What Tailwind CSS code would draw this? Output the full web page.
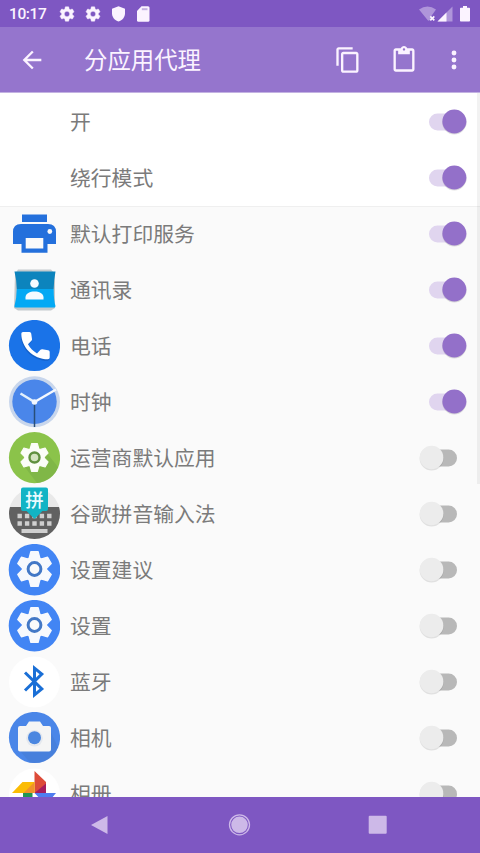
<!DOCTYPE html>
<html lang="zh-CN">
<head>
<meta charset="utf-8">
<title>分应用代理</title>
<script src="https://cdn.jsdelivr.net/npm/@tailwindcss/browser@4"></script>
</head>
<body class="w-[480px] h-[853px] overflow-hidden flex flex-col bg-[#fafafa] font-['Roboto','Noto_Sans_CJK_SC',sans-serif]">
<svg class="hidden">
  <defs>
    <path id="gear" d="M19.14 12.94c.04-.3.06-.61.06-.94 0-.32-.02-.64-.07-.94l2.03-1.58c.18-.14.23-.41.12-.61l-1.92-3.32c-.12-.22-.37-.29-.59-.22l-2.39.96c-.5-.38-1.03-.7-1.62-.94l-.36-2.54c-.04-.24-.24-.41-.48-.41h-3.84c-.24 0-.43.17-.47.41l-.36 2.54c-.59.24-1.13.57-1.62.94l-2.39-.96c-.22-.08-.47 0-.59.22L2.74 8.87c-.12.21-.08.47.12.61l2.03 1.58c-.05.3-.09.63-.09.94s.02.64.07.94l-2.03 1.58c-.18.14-.23.41-.12.61l1.92 3.32c.12.22.37.29.59.22l2.39-.96c.5.38 1.03.7 1.62.94l.36 2.54c.05.24.24.41.48.41h3.84c.24 0 .44-.17.47-.41l.36-2.54c.59-.24 1.13-.56 1.62-.94l2.39.96c.22.08.47 0 .59-.22l1.92-3.32c.12-.22.07-.47-.12-.61l-2.01-1.58zM12 15.6c-1.98 0-3.6-1.62-3.6-3.6s1.62-3.6 3.6-3.6 3.6 1.62 3.6 3.6-1.62 3.6-3.6 3.6z"/>
    <path id="teeth" stroke-width="1.4" stroke-linejoin="round" d="M-3.600-17.200h7.200L5.400-10.500V10.500L3.600 17.200h-7.200L-5.400 10.500V-10.500z"/>
    <g id="cog"><circle r="12.600" stroke="none"/><use href="#teeth"/><use href="#teeth" transform="rotate(60)"/><use href="#teeth" transform="rotate(120)"/></g>
    <g id="settings">
      <circle cx="26" cy="26" r="25.800" fill="#4285f4"/>
      <use href="#cog" transform="translate(26 25.300)" fill="#f7f9fd" stroke="#f7f9fd"/>
      <circle cx="26" cy="25.300" r="6.400" fill="#fafafa" stroke="#4378c6" stroke-width="3"/>
    </g>
    <g id="on">
      <rect x="14" y="19.500" width="38" height="17" rx="8.500" fill="#e0d5ef"/>
      <circle cx="39.300" cy="28.600" r="12" fill="#000" opacity=".13"/>
      <circle cx="39.300" cy="27.500" r="11.900" fill="#9370c9"/>
    </g>
    <g id="off">
      <rect x="10" y="19.500" width="32" height="17" rx="8.500" fill="#b8b8b8"/>
      <circle cx="16.600" cy="28.600" r="12" fill="#000" opacity=".1"/>
      <circle cx="16.600" cy="27.500" r="11.800" fill="#ececec"/>
    </g>
  </defs>
</svg>

<header class="shrink-0 text-[#fbf3ff]">
  <div class="h-[27px] bg-[#7e57c2] flex items-center pl-[9px] pr-[9px]">
    <span class="w-[49px] text-[15.500px] leading-[27px] tracking-[-0.4px] pt-[2px] font-medium">10:17</span>
    <svg class="w-[18px] h-[18px] mr-[8px]" viewBox="0 0 24 24" fill="currentColor" stroke="currentColor" stroke-width=".6"><use href="#gear"/></svg>
    <svg class="w-[18px] h-[18px] mr-[8px]" viewBox="0 0 24 24" fill="currentColor" stroke="currentColor" stroke-width=".6"><use href="#gear"/></svg>
    <svg class="w-[17px] h-[18px] mr-[9px]" viewBox="0 0 17 18" fill="currentColor"><path d="M8.500 1.300 15 3.800v4.400c0 4-2.700 7-6.500 8.300C4.700 15.200 2 12.200 2 8.200V3.800z"/></svg>
    <svg class="w-[14px] h-[18px]" viewBox="0 0 14 18"><path fill="currentColor" d="M5.500 1.300h6.500q1.500 0 1.500 1.500v12.400q0 1.500-1.500 1.500H2.500Q1 16.700 1 15.200V6z"/><path d="M5.800 3.200h5.700v2H5.800z" fill="#c4b0e2"/></svg>
    <svg class="ml-auto w-[52px] h-[20px]" viewBox="0 0 52 20" fill="currentColor">
      <path d="M0 5.500Q8.500-.7 17 5.500L12 12.500v3.300l-2.800 1z" opacity=".4"/>
      <path d="m11.300 12.300 4 4m0-4-4 4" stroke="currentColor" stroke-width="1.700"/>
      <path d="M33.500 2.500v15H18.500z" opacity=".4"/><path d="M27.500 8.500v9h-9z"/>
      <path d="M44 2h4v1.700h2.200q.8 0 .8.800v12.200q0 .8-.8.800h-8.400q-.8 0-.8-.8V4.500q0-.8.800-.8H44z"/>
    </svg>
  </div>
  <div class="h-[66px] bg-[#9575cd] flex items-center pl-[18px] pr-[12px] border-b border-[#c3b2e2]">
    <svg class="w-[28px] h-[28px]" viewBox="0 0 24 24" fill="currentColor"><path d="M20 11H7.830l5.590-5.590L12 4l-8 8 8 8 1.410-1.410L7.830 13H20z"/></svg>
    <h1 class="ml-[38px] -mt-[2px] text-[23.400px] leading-[32px] text-[#fbf3ff] font-['Noto_Sans_CJK_SC',sans-serif]">分应用代理</h1>
    <svg class="ml-auto w-[28px] h-[28px]" viewBox="0 0 24 24" fill="currentColor"><path d="M16 1H4c-1.100 0-2 .9-2 2v14h2V3h12zm3 4H8c-1.100 0-2 .9-2 2v14c0 1.100.9 2 2 2h11c1.100 0 2-.9 2-2V7c0-1.100-.9-2-2-2m0 16H8V7h11z"/></svg>
    <svg class="ml-[28px] w-[28px] h-[28px]" viewBox="0 0 24 24" fill="currentColor"><path d="M19 2h-4.180C14.400.84 13.300 0 12 0S9.600.84 9.180 2H5c-1.100 0-2 .9-2 2v16c0 1.100.9 2 2 2h14c1.100 0 2-.9 2-2V4c0-1.100-.9-2-2-2m-7 0c.55 0 1 .45 1 1s-.45 1-1 1-1-.45-1-1 .45-1 1-1m7 18H5V4h2v3h10V4h2z"/></svg>
    <svg class="ml-[22px] w-[28px] h-[28px]" viewBox="0 0 24 24" fill="currentColor"><circle cx="12" cy="6" r="2.100"/><circle cx="12" cy="12" r="2.100"/><circle cx="12" cy="18" r="2.100"/></svg>
  </div>
</header>

<main class="relative flex-1 min-h-0 overflow-hidden text-[#7b7b7b] text-[20.800px] leading-[30px] font-['Noto_Sans_CJK_SC',sans-serif]">
  <section class="bg-white pt-[1px] border-b border-[#efefef]">
    <div class="h-[56px] flex items-center pl-[70px] pr-[5px]"><span class="flex-1 pb-[2px]">开</span><svg class="w-[60px] h-[56px]"><use href="#on"/></svg></div>
    <div class="h-[56px] flex items-center pl-[70px] pr-[5px]"><span class="flex-1 pb-[2px]">绕行模式</span><svg class="w-[60px] h-[56px]"><use href="#on"/></svg></div>
  </section>
  <ul class="-mt-px">
    <li class="h-[56px] flex items-center pl-[8px] pr-[5px]">
      <svg class="w-[52px] h-[52px] mr-[10px]" viewBox="0 0 52 52"><path fill="#2470dc" fill-rule="evenodd" d="M14 6.500h25V14H14zM13 16h27q8 0 8 8v12h-8.500v8.700h-26V36H5V24q0-8 8-8zm4.700 14v10.500h17.600V30z"/><circle cx="41.800" cy="23.500" r="2.400" fill="#fafafa"/></svg>
      <span class="flex-1 pb-[2px]">默认打印服务</span><svg class="w-[60px] h-[56px]"><use href="#on"/></svg>
    </li>
    <li class="h-[56px] flex items-center pl-[8px] pr-[5px]">
      <svg class="w-[52px] h-[52px] mr-[10px]" viewBox="0 0 52 52"><path d="M7 10 10 5.500h33l4 4.500v34l-4 2.500H10L6 44z" fill="#c3cacd"/><path d="M6.500 7.500h41q-1.800 9-1.800 17.500h-37Q8.500 15 6.500 7.500" fill="#0c84bd"/><path d="M8.700 25h37q0 12 1.800 17 0 1.500-1.500 1.500H8q-2 0-1.500-1.500 2.200-8 2.200-17" fill="#03a9f4"/><circle cx="26.500" cy="19.500" r="4.300" fill="#f5fbff"/><path d="M17.500 35.500v-2.200c0-3.800 4.500-5.800 9-5.800s9 2 9 5.800v2.200z" fill="#f5fbff"/></svg>
      <span class="flex-1 pb-[2px]">通讯录</span><svg class="w-[60px] h-[56px]"><use href="#on"/></svg>
    </li>
    <li class="h-[56px] flex items-center pl-[8px] pr-[5px]">
      <svg class="w-[52px] h-[52px] mr-[10px]" viewBox="0 0 52 52"><circle cx="26.500" cy="25.500" r="25.600" fill="#1a73e8"/><g id="handset"><path transform="translate(-.5 1.500)" opacity=".4" fill="#0d479a" d="M15 12h6.500q1.500 0 1.700 1.500l.8 5.500q.2 1-.6 1.800L20 24.200c2 3.800 5.300 7 9 9.200l3.500-3.600q.8-.8 1.900-.6l5.700 1q1.600.3 1.600 1.800v5.500q0 1.800-1.700 1.800C25 39.300 13.300 27 13.300 13.700q0-1.700 1.700-1.700"/><path d="M15 12h6.500q1.500 0 1.700 1.500l.8 5.500q.2 1-.6 1.800L20 24.200c2 3.800 5.300 7 9 9.200l3.500-3.600q.8-.8 1.900-.6l5.700 1q1.600.3 1.600 1.800v5.500q0 1.800-1.700 1.800C25 39.300 13.300 27 13.300 13.700q0-1.700 1.700-1.700" fill="#fff"/></g></svg>
      <span class="flex-1 pb-[2px]">电话</span><svg class="w-[60px] h-[56px]"><use href="#on"/></svg>
    </li>
    <li class="h-[56px] flex items-center pl-[8px] pr-[5px]">
      <svg class="w-[52px] h-[52px] mr-[10px]" viewBox="0 0 52 52"><circle cx="26.500" cy="25.700" r="25.500" fill="#c8d6ec"/><circle cx="26.500" cy="25.700" r="22.200" fill="#4a86ea"/><path d="M26.500 26v25" stroke="#284e78" stroke-width="1.500"/><path d="M12.500 17.500 26.500 26" stroke="#e3f0fc" stroke-width="2.600"/><path d="M26.500 26 48 13.500" stroke="#f5f9ff" stroke-width="2.400"/><circle cx="26.500" cy="26" r="2.800" fill="#f2f7ff"/></svg>
      <span class="flex-1 pb-[2px]">时钟</span><svg class="w-[60px] h-[56px]"><use href="#on"/></svg>
    </li>
    <li class="h-[56px] flex items-center pl-[8px] pr-[5px]">
      <svg class="w-[52px] h-[52px] mr-[10px]" viewBox="0 0 52 52"><circle cx="26.500" cy="25.700" r="25.600" fill="#8bc34a"/><path d="m16 34 13 17c10-1 18-7 21-16L38 20z" fill="#79af46" opacity=".6"/><use href="#cog" transform="translate(26.500 25.500) scale(.81)" fill="#fbfdf8" stroke="#fbfdf8"/><circle cx="26.500" cy="25.500" r="5" fill="#d3e3c0" stroke="#5f903f" stroke-width="2.400"/></svg>
      <span class="flex-1 pb-[2px]">运营商默认应用</span><svg class="w-[60px] h-[56px]"><use href="#off"/></svg>
    </li>
    <li class="h-[56px] flex items-center pl-[8px] pr-[5px]">
      <svg class="w-[52px] h-[52px] mr-[10px] overflow-visible" viewBox="0 0 52 52"><circle cx="26.500" cy="25.500" r="25.500" fill="#e9e9e9"/><path d="M2 19h49q1 3 1 6.500a25.500 25.500 0 0 1-51 0Q1 22 2 19" fill="#616161"/><path d="M9.500 28h34M9.500 35.500h34" stroke="#cfcfcf" stroke-width="4.400" stroke-dasharray="4.400 3"/><rect x="13.500" y="41" width="26" height="4" fill="#cfcfcf"/><path d="M15-.500h23q2 0 2 2V21q0 2-2 2h-3.500L26.500 31l-8-8H15q-2 0-2-2V1.500q0-2 2-2" fill="#12b4c5"/><text x="26.500" y="19.300" text-anchor="middle" font-size="18.500" font-family="Noto Sans CJK SC" font-weight="500" fill="#e9fbff">拼</text></svg>
      <span class="flex-1 pb-[2px]">谷歌拼音输入法</span><svg class="w-[60px] h-[56px]"><use href="#off"/></svg>
    </li>
    <li class="h-[56px] flex items-center pl-[8px] pr-[5px]">
      <svg class="w-[52px] h-[52px] mr-[10px]" viewBox="-.5 .3 52 52"><use href="#settings"/></svg>
      <span class="flex-1 pb-[2px]">设置建议</span><svg class="w-[60px] h-[56px]"><use href="#off"/></svg>
    </li>
    <li class="h-[56px] flex items-center pl-[8px] pr-[5px]">
      <svg class="w-[52px] h-[52px] mr-[10px]" viewBox="-.5 .3 52 52"><use href="#settings"/></svg>
      <span class="flex-1 pb-[2px]">设置</span><svg class="w-[60px] h-[56px]"><use href="#off"/></svg>
    </li>
    <li class="h-[56px] flex items-center pl-[8px] pr-[5px]">
      <svg class="w-[52px] h-[52px] mr-[10px]" viewBox="0 0 52 52"><circle cx="26.500" cy="26" r="25.500" fill="#fff"/><path d="m17 16.500 16.800 16.300-7.300 6V12.200l7.300 6L17 34.500" fill="none" stroke="#1a6fd6" stroke-width="3"/></svg>
      <span class="flex-1 pb-[2px]">蓝牙</span><svg class="w-[60px] h-[56px]"><use href="#off"/></svg>
    </li>
    <li class="h-[56px] flex items-center pl-[8px] pr-[5px]">
      <svg class="w-[52px] h-[52px] mr-[10px]" viewBox="0 0 52 52"><circle cx="26.500" cy="25.500" r="25.600" fill="#4a86e8"/><path d="m12 39 10 11.500c12 2.500 24-4 28-15L41 16z" fill="#4379d0" opacity=".5"/><path d="M12 14h6l3-4.500h11l3 4.500h6q2 0 2 2v21.500q0 2-2 2H12q-2 0-2-2V16q0-2 2-2" fill="#f5f5f5"/><circle cx="26.500" cy="26.300" r="8.300" fill="#e4e8ee"/><circle cx="26.500" cy="25.700" r="6.500" fill="#4a86e0"/></svg>
      <span class="flex-1 pb-[2px]">相机</span><svg class="w-[60px] h-[56px]"><use href="#off"/></svg>
    </li>
    <li class="h-[56px] flex items-center pl-[8px] pr-[5px]">
      <svg class="w-[52px] h-[52px] mr-[10px]" viewBox="0 0 52 52"><circle cx="26.500" cy="26" r="25.500" fill="#fff"/><path d="M26.500 3 38 14v11H26.500z" fill="#dd4b39"/><path d="M26.500 25 38 15.500V25z" fill="#a61c5d"/><path d="M4 25 14.500 14h12v11z" fill="#fbbc05"/><path d="M15.500 25 26.500 14v11z" fill="#f0932b"/><path d="M26.500 25H48L38 37z" fill="#4f7df0"/><path d="M15 25h9.500v22L15 37z" fill="#219653"/></svg>
      <span class="flex-1 pb-[2px]">相册</span><svg class="w-[60px] h-[56px]"><use href="#off"/></svg>
    </li>
  </ul>
  <div class="absolute right-0 top-0 w-[3px] h-[391px] bg-black/5"></div>
</main>

<nav class="h-[56px] shrink-0 bg-[#7e57c2] flex items-center justify-between pl-[87px] pr-[90px]">
  <svg class="w-[24px] h-[24px]" viewBox="0 0 24 24"><path d="M4 12 20.500 3v18z" fill="#cdb9e8"/></svg>
  <svg class="w-[24px] h-[24px]" viewBox="0 0 24 24"><circle cx="12.500" cy="11.800" r="10" fill="none" stroke="#cdb9e8" stroke-width="1.300"/><circle cx="12.500" cy="11.800" r="8.300" fill="#cdb9e8"/></svg>
  <svg class="w-[24px] h-[24px]" viewBox="0 0 24 24"><rect x="2.700" y="2.700" width="18" height="18" rx="1" fill="#cdb9e8"/></svg>
</nav>
</body>
</html>
